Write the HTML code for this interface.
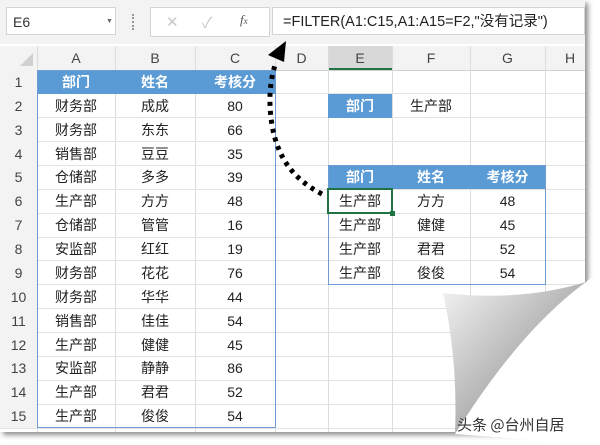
<!DOCTYPE html><html><head><meta charset="utf-8"><style>
body{margin:0;width:600px;height:445px;background:#fff;position:relative;overflow:hidden;font-family:"Liberation Sans","Noto Sans CJK SC",sans-serif;}
.a{position:absolute;}
.c{position:absolute;height:24px;line-height:24px;text-align:center;font-size:14px;color:#222;box-sizing:border-box;}
</style></head><body>
<div class="a" style="left:0;top:0;width:585px;height:432px;background:#fff;box-shadow:3px 3px 5px rgba(0,0,0,.45);"></div>
<div class="a" style="left:0;top:0;width:585px;height:44px;background:#f3f3f3;"></div>
<div class="a" style="left:6px;top:7px;width:110px;height:28px;background:#fff;border:1px solid #d4d4d4;font-size:14px;line-height:28px;color:#333;padding-left:6px;box-sizing:border-box;">E6<span style="position:absolute;left:99px;top:0;font-size:7px;color:#666">▼</span></div>
<div class="a" style="left:132px;top:14px;width:2px;height:16px;border-left:2px dotted #999;"></div>
<div class="a" style="left:150px;top:7px;width:118px;height:28px;background:#fff;border:1px solid #d4d4d4;"></div>
<div class="a" style="left:166px;top:13px;color:#c8c8c8;font-size:15px;">✕</div>
<div class="a" style="left:202px;top:12px;color:#c8c8c8;font-size:15px;">✓</div>
<div class="a" style="left:240px;top:12px;color:#555;font-size:13px;font-style:italic;font-family:'Liberation Serif',serif;">f<span style="font-size:9px">x</span></div>
<div class="a" style="left:272px;top:7px;width:313px;height:28px;background:#fff;border:1px solid #d4d4d4;font-size:14.5px;line-height:28px;color:#222;padding-left:10px;box-sizing:border-box;white-space:nowrap;">=FILTER(A1:C15,A1:A15=F2,"没有记录")</div>
<div class="a" style="left:0;top:46px;width:585px;height:24px;background:#f3f3f3;border-bottom:1px solid #d0d0d0;"></div>
<div class="a" style="left:328px;top:46px;width:64px;height:24px;background:#d8d8d8;border-bottom:2px solid #217346;box-sizing:border-box;"></div>
<svg class="a" style="left:0;top:0" width="600" height="445">
<g stroke="#dcdcdc" stroke-width="1">
<line x1="37.5" y1="46" x2="37.5" y2="432"/><line x1="115.5" y1="46" x2="115.5" y2="432"/><line x1="195.5" y1="46" x2="195.5" y2="432"/><line x1="275.5" y1="46" x2="275.5" y2="432"/><line x1="328.5" y1="46" x2="328.5" y2="432"/><line x1="392.5" y1="46" x2="392.5" y2="432"/><line x1="470.5" y1="46" x2="470.5" y2="432"/><line x1="545.5" y1="46" x2="545.5" y2="432"/>
</g>
<polygon points="20,66 33,66 33,53" fill="#d0d0d0"/>
</svg>
<div id="g"></div>
<script>
var s='',ys=[];for(var i=0;i<15;i++){var y=70+i*23.87;ys.push(y);s+='<div class="a" style="left:0;top:'+(y+23.4)+'px;width:585px;height:1px;background:#e2e2e2"></div>';s+='<div class="c" style="left:0;top:'+y+'px;width:37px;color:#444;background:#f3f3f3;">'+(i+1)+'</div>';}
var hd=['A','B','C','D','E','F','G','H'],hx=[37,115,195,275,328,392,470,545],hw=[78,80,80,53,64,78,75,50];
for(var j=0;j<8;j++)s+='<div class="c" style="left:'+hx[j]+'px;top:46px;width:'+hw[j]+'px;color:#444;">'+hd[j]+'</div>';
var d=[['部门','姓名','考核分'],['财务部','成成','80'],['财务部','东东','66'],['销售部','豆豆','35'],['仓储部','多多','39'],['生产部','方方','48'],['仓储部','管管','16'],['安监部','红红','19'],['财务部','花花','76'],['财务部','华华','44'],['销售部','佳佳','54'],['生产部','健健','45'],['安监部','静静','86'],['生产部','君君','52'],['生产部','俊俊','54']];
for(i=0;i<15;i++)for(j=0;j<3;j++){var h=i==0;s+='<div class="c" style="left:'+hx[j]+'px;top:'+ys[i]+'px;width:'+hw[j]+'px;'+(h?'background:#5b9bd5;color:#fff;font-weight:bold;':'')+'">'+d[i][j]+'</div>';}
s+='<div class="a" style="left:37px;top:70px;width:239px;height:358px;border:1px solid #6f9bd0;box-sizing:border-box"></div>';
s+='<div class="c" style="left:328px;top:'+ys[1]+'px;width:64px;background:#5b9bd5;color:#fff;font-weight:bold;">部门</div>';
s+='<div class="c" style="left:392px;top:'+ys[1]+'px;width:78px;">生产部</div>';
var e=[['部门','姓名','考核分'],['生产部','方方','48'],['生产部','健健','45'],['生产部','君君','52'],['生产部','俊俊','54']];
for(i=0;i<5;i++)for(j=0;j<3;j++){s+='<div class="c" style="left:'+hx[j+4]+'px;top:'+ys[i+4]+'px;width:'+hw[j+4]+'px;'+(i==0?'background:#5b9bd5;color:#fff;font-weight:bold;':'')+'">'+e[i][j]+'</div>';}
s+='<div class="a" style="left:328px;top:'+ys[4]+'px;width:218px;height:'+(23.87*5)+'px;border:1px solid #6f9bd0;box-sizing:border-box"></div>';
s+='<div class="a" style="left:327px;top:'+(ys[5]-1)+'px;width:66px;height:26px;border:2px solid #217346;box-sizing:border-box"></div>';
s+='<div class="a" style="left:390px;top:'+(ys[5]+22)+'px;width:5px;height:5px;background:#217346"></div>';
document.getElementById('g').innerHTML=s;
</script>
<svg class="a" style="left:0;top:0" width="600" height="445">
<defs><linearGradient id="cg" x1="0" y1="0" x2="1" y2="1"><stop offset="0" stop-color="#f4f4f4"/><stop offset="0.55" stop-color="#b0b0b0"/><stop offset="1" stop-color="#707070"/></linearGradient></defs>
<path d="M586,282 Q520,330 455,434 L600,445 L600,270 Z" fill="#fff"/>
<path d="M443,293 Q520,302 586,282 Q520,330 455,434 Q458,360 443,293 Z" fill="url(#cg)"/>
<path d="M322,194 C295,180 278,160 272,125 C268,100 270,80 276,62" fill="none" stroke="#000" stroke-width="5" stroke-dasharray="4,5"/>
<polygon points="286,41 268,55 284,62" fill="#000"/>
<text x="457" y="430" font-size="15" fill="#333" font-family="Noto Sans CJK SC,sans-serif">头条 @台州自居</text>
</svg>
</body></html>
